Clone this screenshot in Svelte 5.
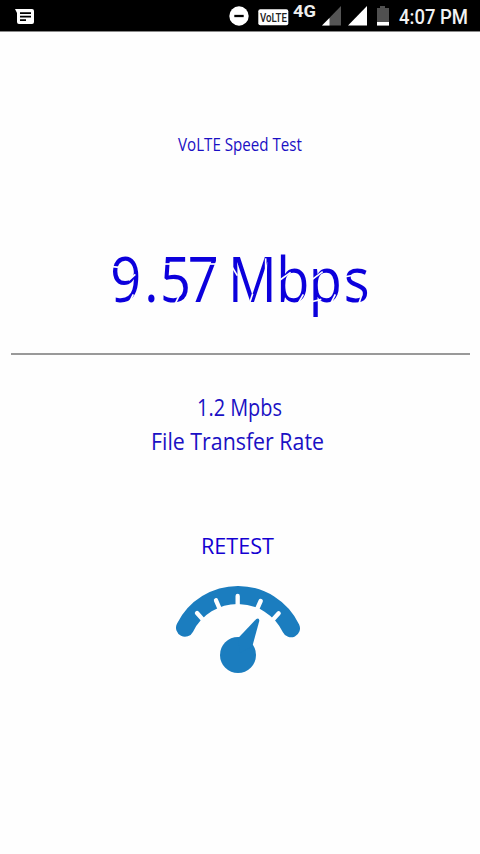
<script>
  const ticks = [
    [96, 264, 119, 290],
    [153, 226, 165, 254],
    [218, 213, 218, 248],
    [287, 228, 275, 255],
    [341, 265, 318, 290]
  ];
  // White slits that give the large reading its stencil look.
  const cuts = [
    'M6 64L34 67', 'M62 106L82 88', 'M62 176L76 148',
    'M160 57H190', 'M202 176L215 148', 'M286 57H330',
    'M370 62L388 92', 'M424 176L434 146', 'M473 40V90',
    'M516 105L548 82', 'M570 176L586 148',
    'M612 104L644 80', 'M608 171L640 163', 'M668 176L682 148',
    'M708 96L740 90', 'M752 178L762 148'
  ];
  const glyphX = '2.7 42.2 60.5 92.6 125 139.5 195.7 233.3 274.2';
</script>

<div class="screen">
  <header>
    <svg class="message" width="20" height="18" viewBox="0 0 20 18">
      <path d="M0 0h17q2 0 2 2v11q0 2-2 2H4q-2 0-2-2V4z" fill="#fff" />
      <path d="M5 4.1h11M5 7.6h11M5 11.1h6" stroke="#000" stroke-width="1.6" />
    </svg>
    <svg class="dnd" width="20" height="20" viewBox="0 0 20 20">
      <circle cx="10" cy="10" r="9.7" fill="#fff" />
      <path d="M5.3 10h9.4" stroke="#000" stroke-width="2.3" />
    </svg>
    <svg class="volte" width="31" height="17" viewBox="0 0 31 17">
      <rect x=".3" y=".3" width="30" height="16" rx="2" fill="#fff" />
      <text x="2.6" y="13.5" textLength="34.6" lengthAdjust="spacingAndGlyphs" transform="scale(.78 1)">VoLTE</text>
    </svg>
    <svg class="network" width="24" height="22" viewBox="0 0 24 22">
      <text x="0" y="17" textLength="23" lengthAdjust="spacingAndGlyphs">4G</text>
    </svg>
    <svg class="signal" width="20" height="20" viewBox="0 0 20 20">
      <path d="M0 19.5L19 0v19.5z" fill="#555" />
      <path d="M0 19.5l7.5-7.5v7.5z" fill="#fff" />
    </svg>
    <svg class="signal two" width="20" height="20" viewBox="0 0 20 20">
      <path d="M0 19.5L19 0v19.5z" fill="#fff" />
    </svg>
    <svg class="battery" width="14" height="20" viewBox="0 0 14 20">
      <path d="M1 2h3V0h5v2h4v17.5H1z" fill="#505050" />
      <path d="M1 16h12v3.5H1z" fill="#fff" />
    </svg>
    <svg class="clock" width="72" height="24" viewBox="0 0 72 24">
      <text x="0" y="19" textLength="69" lengthAdjust="spacingAndGlyphs">4:07 PM</text>
    </svg>
  </header>

  <main>
    <svg class="title" width="130" height="28" viewBox="0 0 130 28">
      <text x="3" y="20" textLength="124" lengthAdjust="spacingAndGlyphs">VoLTE Speed Test</text>
    </svg>
    <svg class="speed" width="264" height="80" viewBox="0 0 264 80">
      <text x={glyphX} y="56.5" transform="scale(.86 1)">9.57 Mbps</text>
      <g transform="scale(.33333)" stroke="#fefefe" stroke-width="5" fill="none">
        {#each cuts as d}<path {d} />{/each}
      </g>
    </svg>
    <hr />
    <svg class="rate" width="180" height="70" viewBox="0 0 180 70">
      <text x="47" y="26" textLength="85" lengthAdjust="spacingAndGlyphs">1.2 Mpbs</text>
      <text x="1" y="60" textLength="173" lengthAdjust="spacingAndGlyphs">File Transfer Rate</text>
    </svg>
    <button aria-label="RETEST">
      <svg class="retest" width="80" height="32" viewBox="0 0 80 32">
        <text x="1" y="24" textLength="73" lengthAdjust="spacingAndGlyphs">RETEST</text>
      </svg>
      <svg class="gauge" width="130" height="95" viewBox="30 180 390 285">
        <path d="M60 308A177 177 0 0 1 378 310" fill="none" stroke="#1b7dbf" stroke-width="54" stroke-linecap="round" />
        {#each ticks as [x1, y1, x2, y2]}
          <line {x1} {y1} {x2} {y2} stroke="#fefefe" stroke-width="13" stroke-linecap="round" />
        {/each}
        <circle cx="219" cy="390" r="54" fill="#1b7dbf" />
        <path d="M219 340L274 282Q282 277 283 287L262 364L225 384z" fill="#1b7dbf" />
      </svg>
    </button>
  </main>
</div>

<style>
  :global(body) { background: #fefefe; }
  .screen { width: 480px; height: 854px; background: #fefefe; overflow: hidden; }
  svg { display: block; flex: none; overflow: visible; }
  header {
    height: 31px; background: #000; border-bottom: 1px solid #888;
    display: flex; align-items: flex-start; font-family: Roboto, sans-serif;
  }
  .message { margin: 9px 0 0 15px; }
  .dnd { margin: 6px 0 0 194px; }
  .volte { margin: 9px 0 0 9px; }
  .volte text { font-size: 13.5px; font-weight: 500; fill: #222; }
  .network { margin: 0 0 0 4px; }
  .network text { font-size: 17px; font-weight: 700; fill: #eee; }
  .signal { margin: 6px 0 0 5px; }
  .signal.two { margin-left: 6px; }
  .battery { margin: 6px 0 0 8px; }
  .clock { margin: 5px 0 0 9px; }
  .clock text { font-size: 19.5px; font-weight: 500; fill: #f2f2f2; }
  main {
    display: flex; flex-direction: column; align-items: center;
    font-family: "Open Sans", "Noto Sans", sans-serif;
  }
  main text { fill: #1a10c4; font-weight: 500; }
  .title { margin-top: 99px; }
  .title text { font-size: 17.5px; font-weight: 400; }
  .speed { margin-top: 86px; }
  .speed text { font-size: 63px; font-weight: 500; fill: #0c00dc; }
  hr { width: 459px; height: 2px; border: 0; margin: 28px 0 0; background: #999; }
  .rate { margin: 35px 0 0; }
  .rate text { font-size: 23.5px; }
  button {
    border: 0; background: none; padding: 0; margin: 70px 0 0;
    display: flex; flex-direction: column; align-items: center; font-family: inherit;
  }
  .retest text { font-size: 22.5px; fill: #1400d2; font-weight: 500; }
  .gauge { margin-top: 23px; }
</style>
